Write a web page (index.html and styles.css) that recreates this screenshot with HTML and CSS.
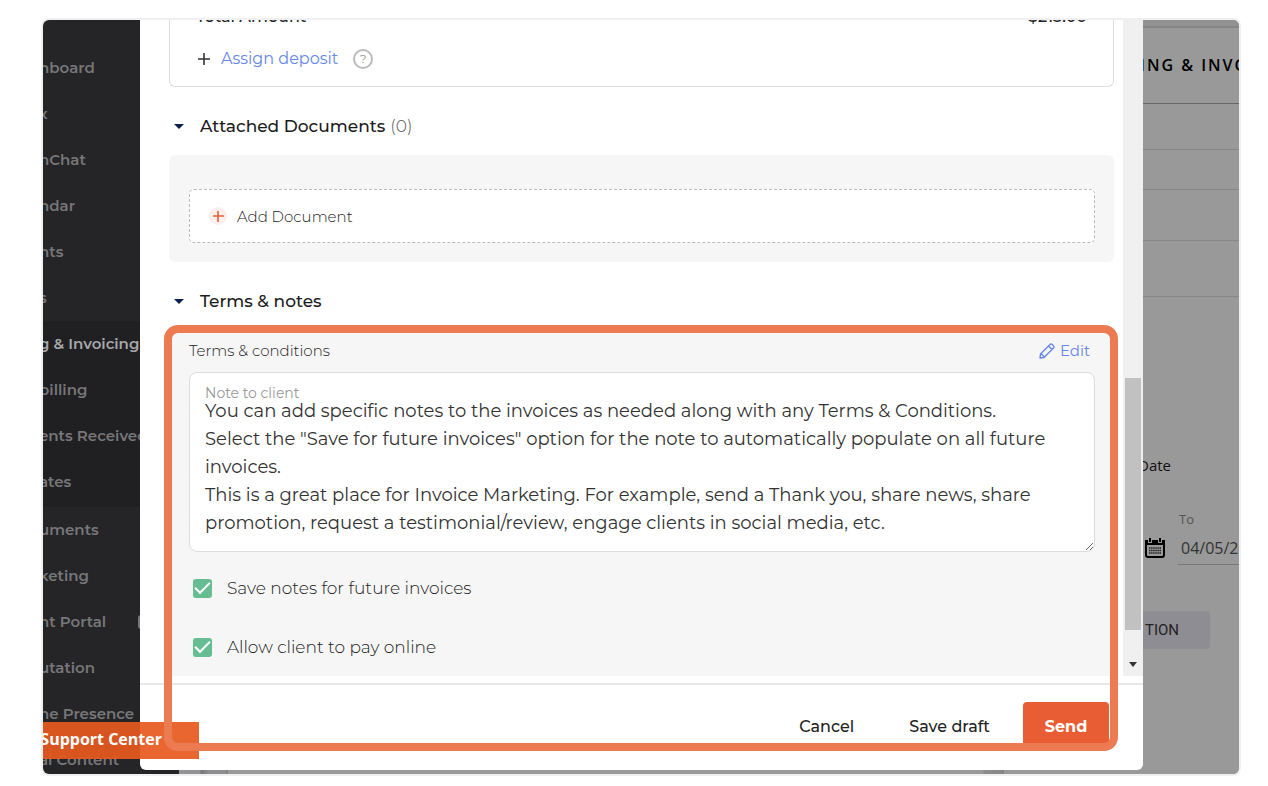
FILE: index.html
```html
<!DOCTYPE html>
<html lang="en">
<head>
  <meta charset="UTF-8" />
  <title>Billing &amp; Invoicing</title>
  <link rel="stylesheet" href="styles.css">
</head>
<body>

<div class="frame">

  <!-- page behind the dialog -->
  <nav class="sidebar">
    <a href="#">hboard</a>
    <a href="#">x</a>
    <a href="#">nChat</a>
    <a href="#">ndar</a>
    <a href="#">nts</a>
    <a href="#">s</a>
    <div class="submenu">
      <a href="#" class="active">g &amp; Invoicing</a>
      <a href="#">billing</a>
      <a href="#">ents Received</a>
      <a href="#">ates</a>
    </div>
    <a href="#">uments</a>
    <a href="#">keting</a>
    <a href="#">nt Portal <span class="badge"></span></a>
    <a href="#">utation</a>
    <a href="#">ne Presence</a>
    <a href="#">al Content</a>
  </nav>

  <main class="page">
    <div class="side">
      <div class="topbar"></div>
      <div class="title">ING &amp; INVO</div>
      <div class="row r1"></div>
      <div class="row r2"></div>
      <div class="row r3"></div>
      <div class="row r4"></div>
      <div class="date-title">Date</div>
      <label class="to-label" for="dateTo">To</label>
      <div class="date-line">
        <svg width="20" height="22" viewBox="0 0 20 22">
          <path d="M1 6h18v12a2 2 0 0 1-2 2H3a2 2 0 0 1-2-2z" fill="none" stroke="#000" stroke-width="2"/>
          <path d="M0 3h20v5H0z"/>
          <path d="M5 0v6M15 0v6" stroke="#999" stroke-width="4"/>
          <path d="M5 1v4M15 1v4" stroke="#000" stroke-width="2"/>
          <path d="M4 11h12M4 13.500h12M4 16h12" stroke="#222" stroke-width="1.3" stroke-dasharray="1.5 .6"/>
        </svg>
        <input type="text" id="dateTo" value="04/05/2022" />
      </div>
      <button class="action">TION</button>
    </div>
  </main>

  <!-- invoice dialog -->
  <div class="modal">
    <div class="modal-body">
      <div class="content">
        <div class="total-card">
          <div class="total-line"><span>Total Amount</span><span>$213.00</span></div>
          <div class="deposit-line">
            <svg width="12" height="12" viewBox="0 0 12 12"><path d="M6 0v12M0 6h12" stroke="#333" stroke-width="1.6"/></svg>
            <a href="#">Assign deposit</a>
            <span class="help">?</span>
          </div>
        </div>

        <h2><span class="caret"></span>Attached Documents <span class="count">(0)</span></h2>
        <div class="panel docs">
          <button class="add-doc">
            <svg width="18" height="18" viewBox="0 0 18 18"><circle cx="9" cy="9" r="9" fill="#fdf0ec"/><path d="M9 4v11M4 9h11" stroke="#e8603a" stroke-width="1.6"/></svg>
            Add Document
          </button>
        </div>

        <h2><span class="caret"></span>Terms &amp; notes</h2>
        <div class="panel terms">
          <div class="terms-line">
            <span>Terms &amp; conditions</span>
            <a href="#">
              <svg width="16" height="16" viewBox="0 0 16 16" fill="none" stroke="#6787ea" stroke-width="1.4" stroke-linejoin="round"><path d="M1 15l.5-4L11 1.500a1.500 1.500 0 0 1 2.200 0l1.300 1.300a1.500 1.500 0 0 1 0 2.200L5 14.500zM9.500 3l3.500 3.500M2 10.500L5.500 14"/></svg>
              Edit
            </a>
          </div>
          <div class="note">
            <label for="note">Note to client</label>
            <textarea id="note" rows="5" spellcheck="false">You can add specific notes to the invoices as needed along with any Terms &amp; Conditions.
Select the "Save for future invoices" option for the note to automatically populate on all future invoices.
This is a great place for Invoice Marketing. For example, send a Thank you, share news, share promotion, request a testimonial/review, engage clients in social media, etc.</textarea>
          </div>
          <label class="check"><input type="checkbox" checked /> Save notes for future invoices</label>
          <label class="check"><input type="checkbox" checked /> Allow client to pay online</label>
        </div>
      </div>
      <div class="scrollbar">
        <div class="thumb"></div>
        <div class="arrow"></div>
      </div>
    </div>
    <div class="modal-footer">
      <button>Cancel</button>
      <button>Save draft</button>
      <button class="send">Send</button>
    </div>
  </div>

  <a href="#" class="support">Support Center</a>
  <div class="highlight"></div>
</div>

</body>
</html>
```
FILE: styles.css
```css
* { box-sizing: border-box; }
body { margin: 0; height: 100vh; padding: 18px 27px 10px 41px; background: #fff; font-family: Montserrat, Inter, sans-serif; font-size: 16px; line-height: 24px; color: #222; }
a { text-decoration: none; color: #6787ea; }
button { font-family: inherit; border: none; background: none; padding: 0; color: #222; }
svg { flex: none; }

.frame { position: relative; display: flex; height: 100%; border: 2px solid #f0f0f2; border-radius: 8px; overflow: hidden; }

/* sidebar */
.sidebar { flex: none; width: 136px; padding-top: 25px; background: #252527; overflow: hidden; }
.sidebar a { display: flex; align-items: center; height: 46px; margin-left: -4px; font-size: 15px; font-weight: 600; color: #777779; white-space: nowrap; }
.submenu { padding-bottom: 2px; background: #202022; }
.sidebar .active { color: #a8a8aa; }
.badge { width: 30px; height: 14px; margin: 0 11px 0 auto; border-radius: 3px; background: #777779; }

/* page under the overlay */
.page { flex: 1; background: #999 linear-gradient(90deg, #939396 21px, #77777a 22px, #8e8e90 30px, #8e8e90 47px, #777 48px, #999 49px, #999 804px, #8c8c8c 805px, #888 823px, #777 824px, #999 825px); overflow: hidden; }
.side { width: 96px; margin-left: auto; font-family: "Open Sans", sans-serif; color: #111; white-space: nowrap; overflow: hidden; }
.topbar { height: 8px; background: #929292; border-bottom: 2px solid #868686; }
.title { height: 76px; line-height: 74px; font-size: 16px; font-weight: 600; letter-spacing: 2px; border-bottom: 1px solid #666; margin-left: -3px; color: #000; }
.row { border-bottom: 1px solid #868686; }
.r1 { height: 46px; }
.r2 { height: 40px; }
.r3 { height: 51px; }
.r4 { height: 56px; }
.date-title { margin: 156px 0 0 -5px; font-size: 15px; }
.to-label { display: block; margin: 30px 0 0 36px; font-size: 13px; color: #555; }
.date-line { display: flex; align-items: center; gap: 13px; height: 34px; padding-left: 2px; }
.date-line input { flex: none; width: 90px; height: 34px; padding: 0 3px; border: none; border-bottom: 1px solid #777; background: none; font-family: inherit; font-size: 16px; color: #333; }
.action { width: 67px; height: 38px; margin-top: 46px; padding-left: 2px; border-radius: 0 4px 4px 0; background: #8e8d94; font-family: Roboto, sans-serif; font-size: 15px; text-align: left; color: #222; }

/* dialog */
.modal { position: absolute; top: 0; bottom: 4px; left: 97px; right: 96px; display: flex; flex-direction: column; background: #fff; border-radius: 0 0 6px 6px; }
.modal-body { display: flex; flex: 1; min-height: 0; overflow: hidden; margin-bottom: 7px; }
.content { flex: 1; padding: 0 9px 0 29px; }
.total-card { padding: 0 26px 15px 26px; border: 1px solid #ddd; border-top: none; border-radius: 0 0 6px 6px; }
.total-line { display: flex; justify-content: space-between; margin-top: -15px; font-weight: 500; }
.deposit-line { display: flex; align-items: center; margin-top: 18px; padding-left: 2px; }
.deposit-line a { margin: 0 15px 0 11px; }
.help { width: 20px; height: 20px; border: 2px solid #bbb; border-radius: 50%; font-size: 12px; line-height: 16px; text-align: center; color: #999; }

h2 { display: flex; align-items: center; margin: 27px 0 17px; padding-left: 5px; font-size: 17px; font-weight: 500; line-height: 24px; color: #1c1c1c; }
.caret { margin-right: 16px; border: 5px solid transparent; border-top-color: #0c1f52; border-bottom: none; }
.count { margin-left: 5px; font-weight: 300; color: #555; }
.panel { background: #f6f6f6; border-radius: 6px; }
.docs { padding: 34px 19px 19px 20px; }
.add-doc { display: flex; align-items: center; gap: 10px; width: 100%; height: 54px; padding: 0 19px; background: #fff; border: 1px dashed #bbb; border-radius: 5px; font-size: 15px; font-weight: 300; color: #222; }
.terms { padding: 9px 19px 17px 20px; border-radius: 6px 6px 0 0; }
.terms-line { display: flex; justify-content: space-between; margin-bottom: 9px; padding-right: 5px; font-size: 15px; font-weight: 300; color: #222; }
.terms-line a { display: flex; align-items: center; gap: 5px; font-weight: 400; }
.note { position: relative; display: flex; margin-bottom: 24px; }
.note label { position: absolute; top: 9px; left: 16px; font-size: 14px; color: #999; }
.note textarea { width: 100%; padding: 24px 15px 14px; border: 1px solid #ddd; border-radius: 8px; background: #fff; font-family: inherit; font-size: 18px; line-height: 28px; color: #333; overflow: hidden; resize: both; }
.check { display: flex; align-items: center; gap: 15px; margin: 0 4px 35px; font-size: 17px; font-weight: 300; color: #222; }
.check input { appearance: none; width: 19px; height: 19px; margin: 0; border-radius: 3px; background: #66bd92; display: grid; place-items: center; }
.check input::before { content: ""; width: 13px; height: 6px; margin-top: -4px; border: solid #fff; border-width: 0 0 2px 2px; transform: rotate(-45deg); }
.check:last-child { margin-bottom: 0; }

.scrollbar { display: flex; flex-direction: column; align-items: center; width: 20px; padding-bottom: 9px; background: #f0f0f0; }
.thumb { width: 16px; height: 252px; margin: auto 0 32px; background: #c1c1c1; }
.arrow { border: 4px solid transparent; border-top: 5px solid #333; border-bottom: none; }

.modal-footer { display: flex; justify-content: flex-end; align-items: center; gap: 55px; height: 87px; padding: 0 34px 3px 0; border-top: 2px solid #e8e8e8; }
.modal-footer button { font-size: 16px; font-weight: 500; }
.modal-footer .send { width: 86px; height: 48px; margin-left: -22px; border-radius: 4px; background: #e85d33; color: #fff; font-weight: 700; }

.support { position: absolute; left: 0; bottom: 15px; width: 156px; height: 37px; padding-right: 37px; background: rgba(231, 89, 32, 0.92); font-family: "Open Sans", sans-serif; font-size: 16px; font-weight: 700; line-height: 34px; text-align: right; color: #fff; white-space: nowrap; direction: rtl; }
.highlight { position: absolute; top: 305px; bottom: 23px; left: 121px; right: 121px; border: 8px solid #ed7b51; border-radius: 14px; pointer-events: none; }
```
